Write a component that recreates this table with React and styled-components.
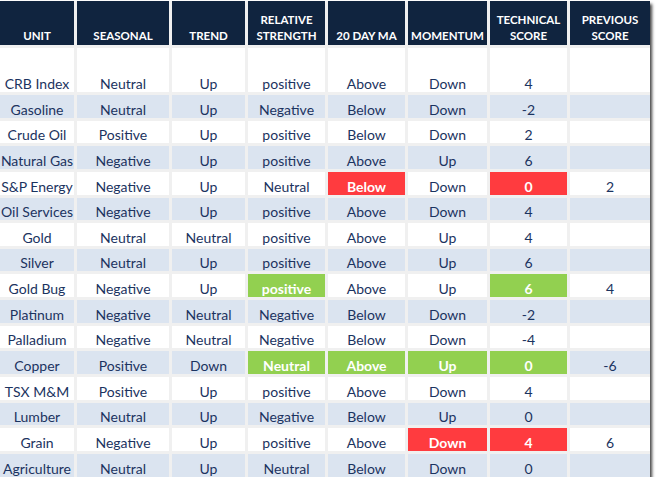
import React from 'react';
import styled, { createGlobalStyle } from 'styled-components';

const GlobalStyle = createGlobalStyle`
  html, body {
    margin: 0;
    padding: 0;
    background: #ffffff;
  }
`;

const columns = [
  { key: 'unit', label: ['UNIT'], width: 74 },
  { key: 'seasonal', label: ['SEASONAL'], width: 92 },
  { key: 'trend', label: ['TREND'], width: 73 },
  { key: 'rs', label: ['RELATIVE', 'STRENGTH'], width: 77 },
  { key: 'ma', label: ['20 DAY MA'], width: 77 },
  { key: 'momentum', label: ['MOMENTUM'], width: 79 },
  { key: 'tech', label: ['TECHNICAL', 'SCORE'], width: 77 },
  { key: 'prev', label: ['PREVIOUS', 'SCORE'], width: 80 },
];

// cells marked with {v, hl} are highlighted
const rows = [
  ['CRB Index', 'Neutral', 'Up', 'positive', 'Above', 'Down', '4', ''],
  ['Gasoline', 'Neutral', 'Up', 'Negative', 'Below', 'Down', '-2', ''],
  ['Crude Oil', 'Positive', 'Up', 'positive', 'Below', 'Down', '2', ''],
  ['Natural Gas', 'Negative', 'Up', 'positive', 'Above', 'Up', '6', ''],
  ['S&P Energy', 'Negative', 'Up', 'Neutral', { v: 'Below', hl: 'red' }, 'Down', { v: '0', hl: 'red' }, '2'],
  ['Oil Services', 'Negative', 'Up', 'positive', 'Above', 'Down', '4', ''],
  ['Gold', 'Neutral', 'Neutral', 'positive', 'Above', 'Up', '4', ''],
  ['Silver', 'Neutral', 'Up', 'positive', 'Above', 'Up', '6', ''],
  ['Gold Bug', 'Negative', 'Up', { v: 'positive', hl: 'green' }, 'Above', 'Up', { v: '6', hl: 'green' }, '4'],
  ['Platinum', 'Negative', 'Neutral', 'Negative', 'Below', 'Down', '-2', ''],
  ['Palladium', 'Negative', 'Neutral', 'Negative', 'Below', 'Down', '-4', ''],
  ['Copper', 'Positive', 'Down', { v: 'Neutral', hl: 'green' }, { v: 'Above', hl: 'green' }, { v: 'Up', hl: 'green' }, { v: '0', hl: 'green' }, '-6'],
  ['TSX M&M', 'Positive', 'Up', 'positive', 'Above', 'Down', '4', ''],
  ['Lumber', 'Neutral', 'Up', 'Negative', 'Below', 'Up', '0', ''],
  ['Grain', 'Negative', 'Up', 'positive', 'Above', { v: 'Down', hl: 'red' }, { v: '4', hl: 'red' }, '6'],
  ['Agriculture', 'Neutral', 'Up', 'Neutral', 'Below', 'Down', '0', ''],
];

const App = () => (
  <>
    <GlobalStyle />
    <Sheet>
      <Table $cols={columns.map((c) => `${c.width}px`).join(' ')}>
        {columns.map((c) => (
          <HeadCell key={c.key}>
            {c.label.map((line) => (
              <span key={line}>{line}</span>
            ))}
          </HeadCell>
        ))}
        {rows.map((row, r) =>
          row.map((cell, i) => {
            const value = typeof cell === 'object' ? cell.v : cell;
            const hl = typeof cell === 'object' ? cell.hl : null;
            return (
              <Cell key={`${r}-${i}`} $alt={r % 2 === 1} $hl={hl}>
                {value}
              </Cell>
            );
          })
        )}
      </Table>
    </Sheet>
  </>
);

export default App;

const Sheet = styled.div`
  width: 650px;
  margin-top: 1px;
  background: #f0f0f0;
  box-shadow: 2px 3px 3px rgba(0, 0, 0, 0.75);
`;

const Table = styled.div`
  display: grid;
  grid-template-columns: ${(p) => p.$cols};
  grid-template-rows: 44px 44px repeat(15, 22.65px);
  column-gap: 3px;
  row-gap: 3px;
  font-family: Lato, 'Liberation Sans', sans-serif;
`;

const HeadCell = styled.div`
  background: #10243f;
  color: #ffffff;
  font-size: 11.5px;
  font-weight: 700;
  display: flex;
  flex-direction: column;
  justify-content: flex-end;
  align-items: center;
  padding-bottom: 1px;
  line-height: 16px;
  text-align: center;
`;

const hlColors = {
  red: '#ff3b3f',
  green: '#92d050',
};

const Cell = styled.div`
  background: ${(p) => (p.$hl ? hlColors[p.$hl] : p.$alt ? '#dbe4f0' : '#ffffff')};
  color: ${(p) => (p.$hl ? '#ffffff' : '#1b3360')};
  font-weight: ${(p) => (p.$hl ? 700 : 400)};
  font-size: 14px;
  display: flex;
  align-items: flex-end;
  justify-content: center;
  line-height: 17px;
  white-space: nowrap;
  overflow: hidden;
`;
